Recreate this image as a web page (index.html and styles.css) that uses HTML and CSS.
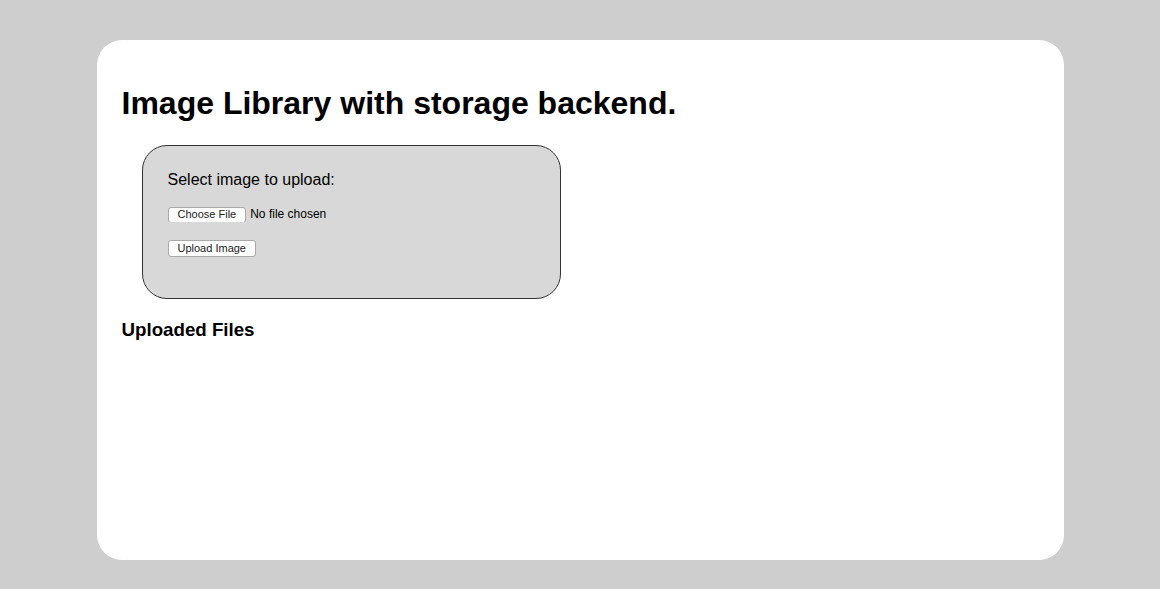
FILE: index.html
```html
<!DOCTYPE html>
<html lang="en">
<head>
<meta charset="utf-8">
<title>Image Library</title>
<link rel="stylesheet" href="styles.css">
</head>
<body>
<main class="card">
  <h1 class="title">Image Library with storage backend.</h1>
  <form class="upload-box" action="#" method="post" enctype="multipart/form-data">
    <label class="upload-label" for="file">Select image to upload:</label>
    <input class="file-input" type="file" id="file" name="file">
    <button class="btn" type="button">Upload Image</button>
  </form>
  <h3 class="section-title">Uploaded Files</h3>
</main>
</body>
</html>
```
FILE: styles.css
```css
html, body {
  margin: 0;
  padding: 0;
}
body {
  background: #cecece;
  font-family: "Liberation Sans", Arial, sans-serif;
  color: #000;
  padding-top: 40px;
  height: 589px;
  box-sizing: border-box;
  overflow: hidden;
}
.card {
  display: block;
  box-sizing: border-box;
  width: 967px;
  height: 520px;
  margin: 0 auto;
  padding: 45px 25px 0;
  background: #fff;
  border-radius: 25px;
}
.title {
  margin: 0 0 23px;
  font-size: 32px;
  font-weight: bold;
  line-height: normal;
}
.upload-box {
  box-sizing: border-box;
  width: 419px;
  height: 154px;
  margin: 0 0 0 20px;
  padding: 25px 25px 0;
  background: #d8d8d8;
  border: 1px solid #333;
  border-radius: 25px;
  display: flex;
  flex-direction: column;
  align-items: flex-start;
}
.upload-label {
  display: block;
  font-size: 16px;
  line-height: 18px;
  margin-bottom: 17px;
}
.file-input {
  font-family: "Liberation Sans", Arial, sans-serif;
  font-size: 12px;
  line-height: 16px;
  height: 16px;
  margin: 0 0 18px;
  padding: 0;
  color: #000;
}
.file-input::file-selector-button,
.btn {
  font-family: "Liberation Sans", Arial, sans-serif;
  font-size: 11px;
  line-height: 13px;
  height: 16px;
  padding: 0 9px;
  margin: 0 4px 0 0;
  background: #fff;
  color: #222;
  border: 1px solid #a9a9a9;
  border-radius: 3px;
  box-sizing: border-box;
}
.btn {
  height: 17px;
  padding: 1px 9px;
  margin: 0;
}
.section-title {
  margin: 20px 0 0;
  font-size: 18.72px;
  font-weight: bold;
  line-height: normal;
}
```
